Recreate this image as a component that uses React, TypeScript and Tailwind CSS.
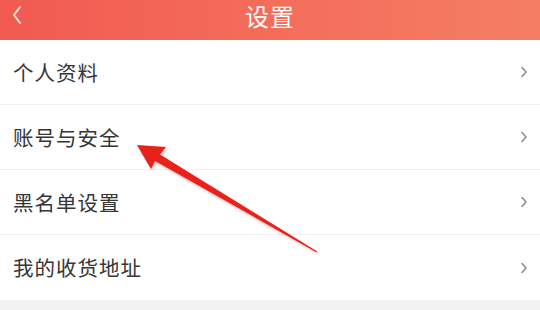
import React from "react";

const items = ["个人资料", "账号与安全", "黑名单设置", "我的收货地址"];

function Chevron() {
  return (
    <svg width="8" height="14" viewBox="0 0 8 14" className="shrink-0">
      <polyline points="2,2.5 6,7 2,11.5" fill="none" stroke="#8f8f8f" strokeWidth="1.6" strokeLinecap="round" strokeLinejoin="round" />
    </svg>
  );
}

export default function App() {
  return (
    <div
      className="relative w-[540px] h-[310px] overflow-hidden bg-[#f2f2f2]"
      style={{ fontFamily: '"Noto Sans CJK SC", "Noto Sans", sans-serif' }}
    >
      <div className="relative flex h-[40px] items-start justify-center bg-gradient-to-r from-[#f15a51] to-[#f57e64] pt-[1px]">
        <svg width="12" height="22" viewBox="0 0 12 22" className="absolute left-[11px] top-[4px]">
          <polyline points="9,3 3,11 9,19" fill="none" stroke="#fde3dd" strokeWidth="2" strokeLinecap="round" strokeLinejoin="round" />
        </svg>
        <span className="text-[24px] leading-[30px] text-white tracking-[1px]">设置</span>
      </div>
      <div className="flex flex-col bg-white">
        {items.map((t, i) => (
          <div
            key={t}
            className={`flex h-[65px] items-center justify-between pl-[13px] pr-[12px] ${i < items.length - 1 ? "border-b border-[#f0f0f0]" : ""}`}
          >
            <span className="text-[20.5px] leading-none text-[#363636] tracking-[1px]">{t}</span>
            <Chevron />
          </div>
        ))}
      </div>
      <svg className="absolute left-0 top-0 pointer-events-none" width="540" height="310" viewBox="0 0 540 310">
        <defs>
          <filter id="blur" x="-20%" y="-20%" width="140%" height="140%">
            <feGaussianBlur stdDeviation="1.4" />
          </filter>
        </defs>
        <polygon
          points="137,145 166,147 160,154.5 317.3,251.6 316.7,252.4 155,161 151,169"
          fill="#b01010"
          opacity="0.25"
          transform="translate(1.5,2)"
          filter="url(#blur)"
        />
        <polygon
          points="137,145 166,147 160,154.5 317.3,251.6 316.7,252.4 155,161 151,169"
          fill="#e8221b"
        />
      </svg>
    </div>
  );
}
